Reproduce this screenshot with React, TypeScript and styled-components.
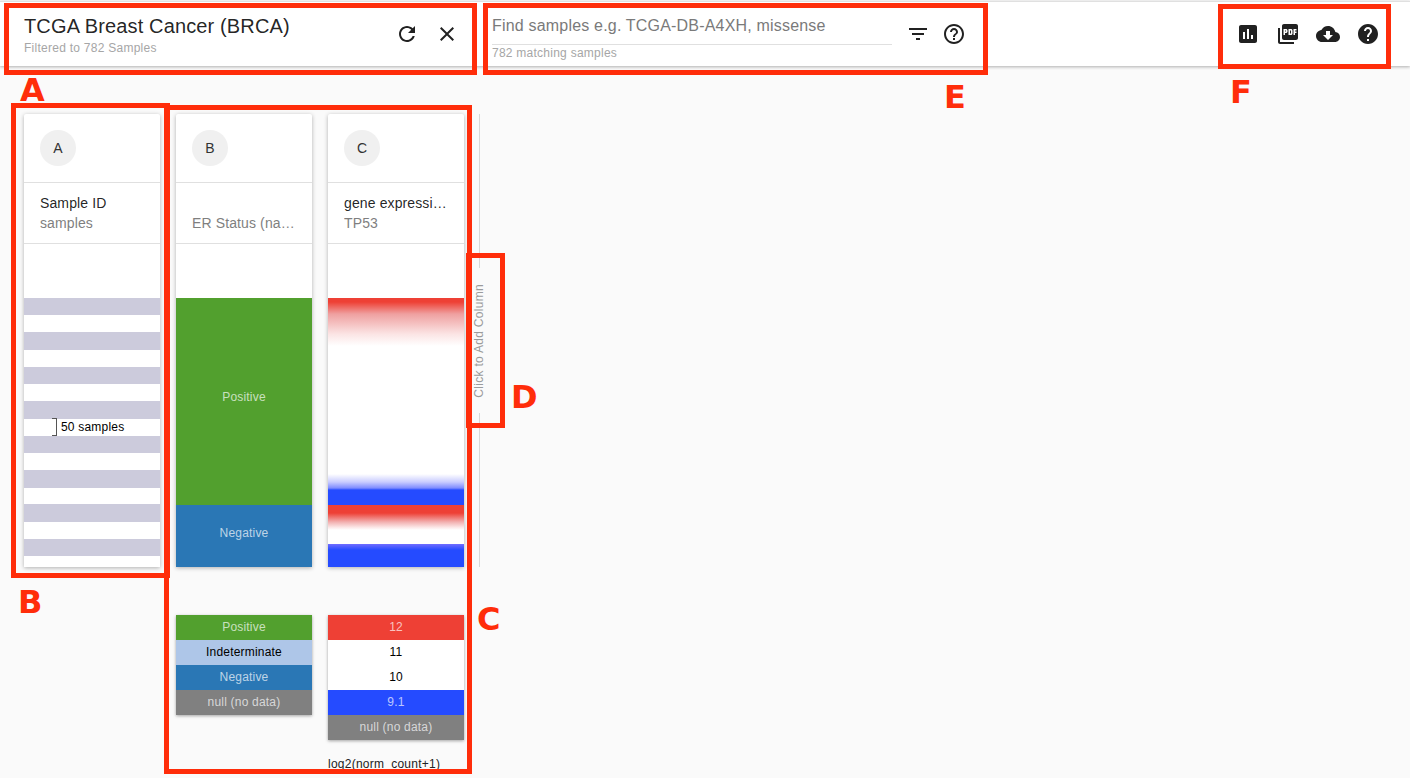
import React from 'react';
import styled, { createGlobalStyle } from 'styled-components';

const GlobalStyle = createGlobalStyle`
  html, body {
    margin: 0;
    padding: 0;
    background: #fafafa;
    font-family: "Liberation Sans", Arial, sans-serif;
  }
`;

const Page = styled.div`
  position: relative;
  width: 1410px;
  height: 778px;
  overflow: hidden;
  background: #fafafa;
`;

const Header = styled.header`
  display: flex;
  align-items: stretch;
  height: 64px;
  margin-top: 1px;
  background: #fff;
  border-top: 1px solid #e0e0e0;
  box-shadow: 0 1px 3px rgba(0, 0, 0, 0.3);
`;
const TitleSegment = styled.div`
  display: flex;
  align-items: center;
  width: 443px;
  padding-left: 24px;
  margin-right: 25px;
`;
const TitleText = styled.div`
  flex: 1;
`;
const Title = styled.div`
  font-size: 20px;
  line-height: 24px;
  letter-spacing: 0.14px;
  color: rgba(0, 0, 0, 0.87);
`;
const Subtitle = styled.div`
  font-size: 12px;
  line-height: 14px;
  letter-spacing: 0.26px;
  color: #a6a6a6;
  margin-top: 3px;
`;
const IconButton = styled.div<{ $size: number }>`
  display: flex;
  align-items: center;
  justify-content: center;
  width: ${p => p.$size}px;
  height: 40px;
  color: rgba(0, 0, 0, 0.87);
`;
const SearchSegment = styled.div`
  display: flex;
  align-items: center;
`;
const SearchBox = styled.div`
  align-self: flex-start;
  width: 400px;
  margin-right: 8px;
  padding-top: 13px;
`;
const SearchInput = styled.div`
  height: 29px;
  font-size: 16px;
  line-height: 22px;
  letter-spacing: 0.19px;
  color: #7a7a7a;
  border-bottom: 1px solid #e0e0e0;
`;
const SearchCount = styled.div`
  font-size: 12px;
  line-height: 13px;
  letter-spacing: 0.25px;
  color: #a6a6a6;
  margin-top: 2px;
`;
const Spacer = styled.div`
  flex: 1;
`;
const ExportBar = styled.div`
  display: flex;
  align-items: center;
  padding-right: 22px;
`;

const Columns = styled.main`
  display: flex;
  align-items: flex-start;
  gap: 16px;
  padding: 48px 0 0 24px;
`;
const Column = styled.section`
  width: 136px;
`;
const Card = styled.div`
  height: 453px;
  display: flex;
  flex-direction: column;
  background: #fff;
  border-radius: 2px 2px 0 0;
  box-shadow: 0 1px 4px rgba(0, 0, 0, 0.3);
`;
const CardTop = styled.div`
  height: 68px;
  box-sizing: border-box;
  padding-top: 16px;
  padding-left: 16px;
`;
const Avatar = styled.div`
  width: 36px;
  height: 36px;
  border-radius: 50%;
  background: #f0f0f0;
  color: #333;
  font-size: 14px;
  display: flex;
  align-items: center;
  justify-content: center;
`;
const CardTitles = styled.div`
  height: 62px;
  box-sizing: border-box;
  padding: 10px 16px 0;
  border-top: 1px solid #e0e0e0;
  border-bottom: 1px solid #e0e0e0;
  font-size: 14px;
  line-height: 20px;
  letter-spacing: 0.12px;
`;
const FieldLabel = styled.div`
  height: 20px;
  color: rgba(0, 0, 0, 0.87);
  white-space: nowrap;
  overflow: hidden;
  text-overflow: ellipsis;
`;
const AssemblyLabel = styled(FieldLabel)`
  color: #7f7f7f;
`;
const MapArea = styled.div`
  position: relative;
  flex: 1;
  margin-top: 54px;
  display: flex;
  flex-direction: column;
`;
const Samples = styled.div`
  flex: 1;
  background: repeating-linear-gradient(
    to bottom,
    #cccbdc 0,
    #cccbdc 17.5px,
    #fff 17.5px,
    #fff 34.4px
  );
`;
const Bracket = styled.div`
  position: absolute;
  left: 28px;
  top: 120px;
  width: 4px;
  height: 16px;
  border: solid #555;
  border-width: 1px 1px 1px 0;
`;
const BracketLabel = styled.div`
  position: absolute;
  left: 37px;
  top: 121px;
  font-size: 12px;
  line-height: 16px;
  letter-spacing: 0.2px;
  color: #000;
`;
const Band = styled.div<{ $height: number; $bg: string; $lift: number }>`
  height: ${p => p.$height}px;
  box-sizing: border-box;
  padding-bottom: ${p => p.$lift}px;
  display: flex;
  align-items: center;
  justify-content: center;
  background: ${p => p.$bg};
  color: rgba(255, 255, 255, 0.7);
  font-size: 12px;
  letter-spacing: 0.2px;
`;
const HeatMap = styled.div`
  flex: 1;
  background: linear-gradient(
    to bottom,
    #ee4035 0,
    #ee4035 4px,
    #efa0a0 16px,
    #fbe4e4 36px,
    #fff 48px,
    #fff 176px,
    #c9ccff 184px,
    #7f8cff 190px,
    #254bff 192px,
    #254bff 206.5px,
    #e9e2ff 207px,
    #ee4035 207.5px,
    #ee4035 215px,
    #f2b0b0 224px,
    #fbe4e4 229px,
    #fff 232px,
    #fff 246px,
    #6a6aff 246.5px,
    #254bff 252px,
    #254bff 269px
  );
`;
const Legend = styled.div`
  margin-top: 48px;
  box-shadow: 0 1px 3px rgba(0, 0, 0, 0.35);
`;
const LegendRow = styled.div<{ $bg: string; $dark?: boolean }>`
  height: 25px;
  box-sizing: border-box;
  padding-bottom: 2px;
  display: flex;
  align-items: center;
  justify-content: center;
  background: ${p => p.$bg};
  color: ${p => (p.$dark ? '#000' : 'rgba(255, 255, 255, 0.7)')};
  font-size: 12px;
  letter-spacing: 0.2px;
`;
const AxisLabel = styled.div`
  margin-top: 17px;
  font-size: 12px;
  line-height: 14px;
  letter-spacing: 0.25px;
  color: #222;
  white-space: nowrap;
`;
const AddColumn = styled.div`
  width: 31px;
  height: 453px;
  margin-left: -16px;
  display: flex;
  flex-direction: column;
  align-items: center;
  color: #9b9b9b;
  font-size: 12px;
`;
const AddLine = styled.div`
  flex: 1;
  width: 1px;
  background: #d8d8d8;
`;
const AddText = styled.div`
  writing-mode: vertical-rl;
  transform: rotate(180deg);
  padding: 16px 0;
  margin-right: 1px;
  line-height: 14px;
  letter-spacing: 0.3px;
`;

// the red callouts drawn on top of the screenshot
const Callout = styled.div<{ $x: number; $y: number; $w: number; $h: number }>`
  position: absolute;
  left: ${p => p.$x}px;
  top: ${p => p.$y}px;
  width: ${p => p.$w}px;
  height: ${p => p.$h}px;
  box-sizing: border-box;
  border: 5px solid #ff2d0a;
`;
const CalloutLetter = styled.div<{ $x: number; $y: number }>`
  position: absolute;
  left: ${p => p.$x}px;
  top: ${p => p.$y}px;
  font-family: "DejaVu Sans", sans-serif;
  font-weight: 700;
  font-size: 32px;
  line-height: 34px;
  color: #ff2d0a;
`;

const Icon = ({ d }: { d: string }) => (
  <svg width="24" height="24" viewBox="0 0 24 24" fill="currentColor">
    <path d={d} />
  </svg>
);

const icons = {
  refresh:
    'M17.65 6.35C16.2 4.9 14.21 4 12 4c-4.42 0-7.99 3.58-7.99 8s3.57 8 7.99 8c3.73 0 6.84-2.55 7.73-6h-2.08c-.82 2.33-3.04 4-5.65 4-3.31 0-6-2.69-6-6s2.69-6 6-6c1.66 0 3.14.69 4.22 1.78L13 11h7V4l-2.35 2.35z',
  close:
    'M19 6.41L17.59 5 12 10.59 6.41 5 5 6.41 10.59 12 5 17.59 6.41 19 12 13.41 17.59 19 19 17.59 13.41 12z',
  filter: 'M10 18h4v-2h-4v2zM3 6v2h18V6H3zm3 7h12v-2H6v2z',
  helpOutline:
    'M11 18h2v-2h-2v2zm1-16C6.48 2 2 6.48 2 12s4.48 10 10 10 10-4.48 10-10S17.52 2 12 2zm0 18c-4.41 0-8-3.59-8-8s3.59-8 8-8 8 3.59 8 8-3.59 8-8 8zm0-14c-2.21 0-4 1.79-4 4h2c0-1.1.9-2 2-2s2 .9 2 2c0 2-3 1.75-3 5h2c0-2.25 3-2.5 3-5 0-2.21-1.79-4-4-4z',
  assessment:
    'M19 3H5c-1.1 0-2 .9-2 2v14c0 1.1.9 2 2 2h14c1.1 0 2-.9 2-2V5c0-1.1-.9-2-2-2zM9 17H7v-7h2v7zm4 0h-2V7h2v10zm4 0h-2v-4h2v4z',
  pdf: 'M20 2H8c-1.1 0-2 .9-2 2v12c0 1.1.9 2 2 2h12c1.1 0 2-.9 2-2V4c0-1.1-.9-2-2-2zm-8.5 7.5c0 .83-.67 1.5-1.5 1.5H9v2H7.5V7H10c.83 0 1.5.67 1.5 1.5v1zm5 2c0 .83-.67 1.5-1.5 1.5h-2.5V7H15c.83 0 1.5.67 1.5 1.5v3zm4-3H19v1h1.5V11H19v2h-1.5V7h3v1.5zM9 9.5h1v-1H9v1zM4 6H2v14c0 1.1.9 2 2 2h14v-2H4V6zm10 5.5h1v-3h-1v3z',
  cloud:
    'M19.35 10.04C18.67 6.59 15.64 4 12 4 9.11 4 6.6 5.64 5.35 8.04 2.34 8.36 0 10.91 0 14c0 3.31 2.69 6 6 6h13c2.76 0 5-2.24 5-5 0-2.64-2.05-4.78-4.65-4.96zM17 13l-5 5-5-5h3V9h4v4h3z',
  help:
    'M12 2C6.48 2 2 6.48 2 12s4.48 10 10 10 10-4.48 10-10S17.52 2 12 2zm1 17h-2v-2h2v2zm2.07-7.75l-.9.92C13.45 12.9 13 13.5 13 15h-2v-.5c0-1.1.45-2.1 1.17-2.83l1.24-1.26c.37-.36.59-.86.59-1.41 0-1.1-.9-2-2-2s-2 .9-2 2H8c0-2.21 1.79-4 4-4s4 1.79 4 4c0 .88-.36 1.68-.93 2.25z',
};

const GREEN = '#52a02e';
const BLUE = '#2a77b5';
const GREY = '#808080';

const erLegend = [
  { label: 'Positive', bg: GREEN },
  { label: 'Indeterminate', bg: '#aec6e8', dark: true },
  { label: 'Negative', bg: BLUE },
  { label: 'null (no data)', bg: GREY },
];
const expressionLegend = [
  { label: '12', bg: '#ee4035' },
  { label: '11', bg: '#fff', dark: true },
  { label: '10', bg: '#fff', dark: true },
  { label: '9.1', bg: '#254bff' },
  { label: 'null (no data)', bg: GREY },
];
const callouts = [
  { x: 4, y: 3, w: 473, h: 72 },
  { x: 483, y: 3, w: 505, h: 72 },
  { x: 1218, y: 4, w: 173, h: 65 },
  { x: 11, y: 103, w: 159, h: 475 },
  { x: 164, y: 105, w: 308, h: 669 },
  { x: 466, y: 253, w: 39, h: 175 },
];
const letters = [
  { label: 'A', x: 20, y: 73 },
  { label: 'B', x: 18, y: 585 },
  { label: 'C', x: 477, y: 602 },
  { label: 'D', x: 511, y: 380 },
  { label: 'E', x: 944, y: 80 },
  { label: 'F', x: 1230, y: 75 },
];

const App = () => {
  return (
    <Page>
      <GlobalStyle />
      <Header>
        <TitleSegment>
          <TitleText>
            <Title>TCGA Breast Cancer (BRCA)</Title>
            <Subtitle>Filtered to 782 Samples</Subtitle>
          </TitleText>
          <IconButton $size={40}><Icon d={icons.refresh} /></IconButton>
          <IconButton $size={40}><Icon d={icons.close} /></IconButton>
        </TitleSegment>
        <SearchSegment>
          <SearchBox>
            <SearchInput>Find samples e.g. TCGA-DB-A4XH, missense</SearchInput>
            <SearchCount>782 matching samples</SearchCount>
          </SearchBox>
          <IconButton $size={36}><Icon d={icons.filter} /></IconButton>
          <IconButton $size={36}><Icon d={icons.helpOutline} /></IconButton>
        </SearchSegment>
        <Spacer />
        <ExportBar>
          <IconButton $size={40}><Icon d={icons.assessment} /></IconButton>
          <IconButton $size={40}><Icon d={icons.pdf} /></IconButton>
          <IconButton $size={40}><Icon d={icons.cloud} /></IconButton>
          <IconButton $size={40}><Icon d={icons.help} /></IconButton>
        </ExportBar>
      </Header>
      <Columns>
        <Column>
          <Card>
            <CardTop><Avatar>A</Avatar></CardTop>
            <CardTitles>
              <FieldLabel>Sample ID</FieldLabel>
              <AssemblyLabel>samples</AssemblyLabel>
            </CardTitles>
            <MapArea>
              <Samples />
              <Bracket />
              <BracketLabel>50 samples</BracketLabel>
            </MapArea>
          </Card>
        </Column>
        <Column>
          <Card>
            <CardTop><Avatar>B</Avatar></CardTop>
            <CardTitles>
              <FieldLabel />
              <AssemblyLabel>ER Status (nature2012)</AssemblyLabel>
            </CardTitles>
            <MapArea>
              <Band $height={207} $bg={GREEN} $lift={9}>Positive</Band>
              <Band $height={62} $bg={BLUE} $lift={6}>Negative</Band>
            </MapArea>
          </Card>
          <Legend>
            {erLegend.map(item => (
              <LegendRow key={item.label} $bg={item.bg} $dark={item.dark}>{item.label}</LegendRow>
            ))}
          </Legend>
        </Column>
        <Column>
          <Card>
            <CardTop><Avatar>C</Avatar></CardTop>
            <CardTitles>
              <FieldLabel>gene expression</FieldLabel>
              <AssemblyLabel>TP53</AssemblyLabel>
            </CardTitles>
            <MapArea>
              <HeatMap />
            </MapArea>
          </Card>
          <Legend>
            {expressionLegend.map(item => (
              <LegendRow key={item.label} $bg={item.bg} $dark={item.dark}>{item.label}</LegendRow>
            ))}
          </Legend>
          <AxisLabel>log2(norm_count+1)</AxisLabel>
        </Column>
        <AddColumn>
          <AddLine />
          <AddText>Click to Add Column</AddText>
          <AddLine />
        </AddColumn>
      </Columns>
      {callouts.map(c => (
        <Callout key={`${c.x}-${c.y}`} $x={c.x} $y={c.y} $w={c.w} $h={c.h} />
      ))}
      {letters.map(l => (
        <CalloutLetter key={l.label} $x={l.x} $y={l.y}>{l.label}</CalloutLetter>
      ))}
    </Page>
  );
};

export default App;
